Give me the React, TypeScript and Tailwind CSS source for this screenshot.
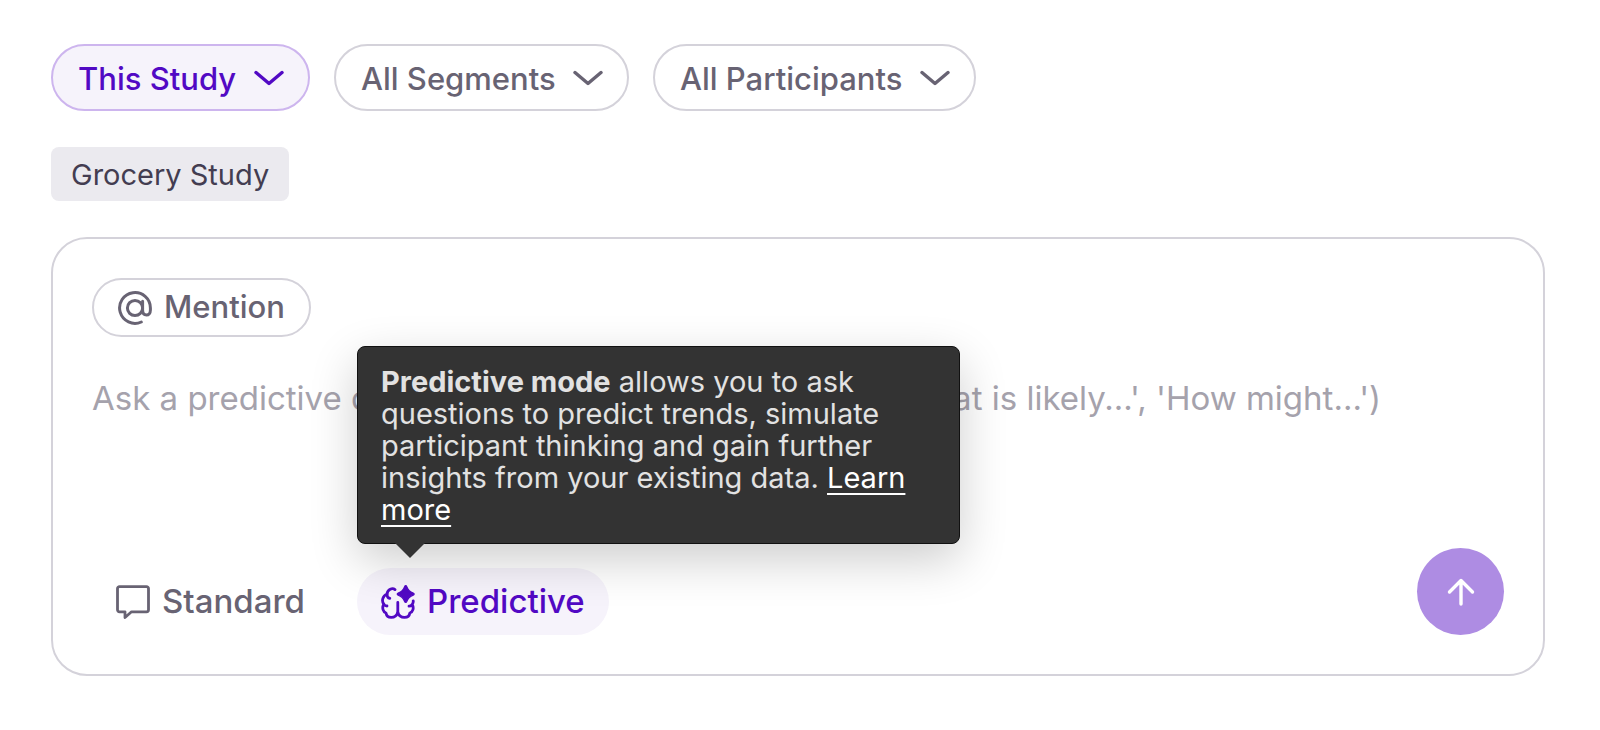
import type { ReactNode } from "react";

const filters = [
  { id: "study", label: "This Study", active: true },
  { id: "segments", label: "All Segments", active: false },
  { id: "participants", label: "All Participants", active: false },
];

function ChevronIcon() {
  return (
    <svg width="30" height="16" viewBox="0 0 30 16" fill="none" stroke="currentColor" strokeWidth="3.4" strokeLinecap="round" strokeLinejoin="round" className="pointer-events-none col-start-1 row-start-1 mr-6 self-center justify-self-end" aria-hidden="true">
      <path d="M2 2.5 15 13.5 28 2.5" />
    </svg>
  );
}

function AtIcon() {
  return (
    <svg width="34" height="34" viewBox="0 0 34 34" fill="none" stroke="currentColor" strokeWidth="3" strokeLinecap="round" aria-hidden="true">
      <circle cx="17" cy="17" r="7.6" />
      <path d="M24.6 10.2v8.9c0 3.4 1.7 5 3.9 5s3.9-1.9 3.9-5V17A15.4 15.4 0 1 0 23.3 31" />
    </svg>
  );
}

function BubbleIcon() {
  return (
    <svg width="34" height="34" viewBox="0 0 34 34" fill="none" stroke="currentColor" strokeWidth="2.8" strokeLinejoin="round" aria-hidden="true">
      <path d="M3.5 1.6h27a2 2 0 0 1 2 2v21.2a2 2 0 0 1-2 2H15.5L9 32.5V26.8H3.5a2 2 0 0 1-2-2V3.6a2 2 0 0 1 2-2Z" />
    </svg>
  );
}

function BrainIcon() {
  return (
    <svg width="34" height="34" viewBox="0 0 34 34" fill="none" stroke="currentColor" strokeWidth="2.8" strokeLinecap="round" strokeLinejoin="round" aria-hidden="true">
      <path d="M14 4.6C11.5 2.6 6.4 4 6 9.2C1.5 10.8 .4 16 2.8 19.2C.6 23 2.2 27 5 28C6 34 14.5 34 16.8 27.5V17.5" />
      <path d="M6 9.2C6 11.8 7 13 8.8 13.4M2.8 19.2C3.8 20.6 4.8 21 6 21" />
      <path d="M16.8 27.5C19 34 28 34 28.8 28C32 27 33.2 23 31.2 19.5C32.2 18 32.4 16.8 32.2 15.8M31.2 19.5C30 20.9 29 21.2 28 21.2" />
      <path fill="currentColor" strokeWidth="1.4" d="M24.7 .8C25.2 .8 25.5 1.2 25.7 1.7C27 5.2 28.7 6.8 32.2 8.1C33.4 8.6 33.4 9.6 32.2 10.1C28.7 11.4 27 13 25.7 16.5C25.3 17.5 24.1 17.5 23.7 16.5C22.4 13 20.7 11.4 17.2 10.1C16 9.6 16 8.6 17.2 8.1C20.7 6.8 22.4 5.2 23.7 1.7C23.9 1.2 24.2 .8 24.7 .8Z" />
    </svg>
  );
}

function SendIcon() {
  return (
    <svg width="28" height="28" viewBox="0 0 28 28" fill="none" stroke="currentColor" strokeWidth="3.4" strokeLinecap="round" strokeLinejoin="round" aria-hidden="true">
      <path d="M14 26V2.5M2.5 14 14 2.5 25.5 14" />
    </svg>
  );
}

function Filter({ id, label, active }: { id: string; label: string; active: boolean }) {
  return (
    <div
      className={
        active
          ? "grid rounded-full border-2 border-[#cdb5ee] bg-[#f6f3fb] text-[#5209c4]"
          : "grid rounded-full border-2 border-[#d4d2da] bg-white text-[#686373]"
      }
    >
      <select id={id} aria-label={label} className="col-start-1 row-start-1 h-[63px] appearance-none rounded-full bg-transparent pt-1 pr-[71px] pl-[25px] text-[31px] font-medium">
        <option>{label}</option>
      </select>
      <ChevronIcon />
    </div>
  );
}

function ModeButton({ icon, label, active }: { icon: ReactNode; label: string; active: boolean }) {
  return (
    <button
      type="button"
      aria-pressed={active}
      className={
        active
          ? "flex h-[67px] items-center gap-3 rounded-full bg-[#f6f3fb] px-6 text-[33px] font-medium text-[#5209c4]"
          : "flex h-[67px] items-center gap-3 rounded-full px-6 text-[33px] font-medium text-[#686373]"
      }
    >
      {icon}
      {label}
    </button>
  );
}

export default function App() {
  return (
    <main className="bg-white pt-11 pr-[55px] pb-[55px] pl-[51px] font-['Inter',sans-serif]">
      <div className="flex flex-wrap gap-6">
        {filters.map((filter) => (
          <Filter key={filter.id} {...filter} />
        ))}
      </div>

      <div className="mt-9 flex">
        <span className="rounded-lg bg-[#ebeaef] px-5 pt-[9px] pb-[7px] text-[29px] leading-[38px] text-[#433d51]">Grocery Study</span>
      </div>

      <form className="mt-9 flex flex-col rounded-[36px] border-2 border-[#d4d2da] px-[39px] py-[39px]">
        <button type="button" className="flex h-[59px] items-center gap-3 self-start rounded-full border-2 border-[#d4d2da] px-6 text-[31px] font-medium text-[#686373]">
          <AtIcon />
          Mention
        </button>

        <textarea
          aria-label="Question"
          className="mt-9 h-[175px] w-full resize-none text-[33px] leading-[50px] text-[#433d51] outline-none placeholder:text-[#a5a2ac]"
          placeholder="Ask a predictive question about your product (e.g., 'What is likely...', 'How might...')"
        />

        <div className="flex items-end">
          <ModeButton icon={<BubbleIcon />} label="Standard" active={false} />
          <div className="relative ml-7">
            <ModeButton icon={<BrainIcon />} label="Predictive" active />
            <div role="tooltip" className="absolute bottom-full left-0 mb-6 w-[603px] rounded-lg border border-[#111111] bg-[#333333] px-[23px] pt-[19px] pb-[17px] text-[29px] leading-8 text-[#e2e2e2] shadow-[0_16px_48px_rgba(0,0,0,0.2)]">
              <strong className="font-bold">Predictive mode</strong> allows you to ask questions to predict trends, simulate participant thinking and gain further insights from your existing data.{" "}
              <a href="#learn-more" className="text-white underline decoration-2 underline-offset-[5px]">
                Learn more
              </a>
              <svg width="30" height="15" viewBox="0 0 30 15" fill="#333333" className="absolute top-full left-[37px]" aria-hidden="true">
                <path d="M0 0h30L15 15Z" />
              </svg>
            </div>
          </div>
          <button type="submit" aria-label="Send" className="ml-auto flex size-[87px] items-center justify-center rounded-full bg-[#ae8ce3] text-white">
            <SendIcon />
          </button>
        </div>
      </form>
    </main>
  );
}
